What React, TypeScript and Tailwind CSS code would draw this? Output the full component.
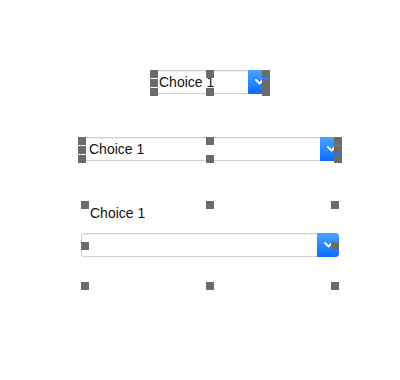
import React from "react"

// eight grab handles around a selected widget on the designer canvas
function Handles() {
  const spots = [
    "left-0 top-0",
    "left-1/2 -translate-x-1/2 top-0",
    "right-0 top-0",
    "left-0 top-1/2 -translate-y-1/2",
    "right-0 top-1/2 -translate-y-1/2",
    "left-0 bottom-0",
    "left-1/2 -translate-x-1/2 bottom-0",
    "right-0 bottom-0",
  ]
  return (
    <>
      {spots.map((s) => (
        <div key={s} className={`absolute w-2 h-2 bg-[#6b6b6b] ${s}`} />
      ))}
    </>
  )
}

function Chevron() {
  return (
    <svg width="9" height="6" viewBox="0 0 9 6" fill="none">
      <path d="M1 1l3.5 3.5L8 1" stroke="white" strokeWidth="1.8" strokeLinecap="round" strokeLinejoin="round" />
    </svg>
  )
}

function Select({ text, rounded }: { text?: string; rounded?: boolean }) {
  return (
    <div
      className={`flex items-center h-6 bg-white border border-[#cfcfcf] shadow-[inset_0_1px_1px_rgba(0,0,0,0.06)] ${
        rounded ? "rounded-[3px]" : ""
      }`}
    >
      <span className="flex-1 pl-2 text-[14px] text-[#111] leading-none">{text}</span>
      <div
        className={`self-stretch -my-px -mr-px w-[22px] flex items-center justify-center bg-gradient-to-b from-[#4aa3ff] to-[#0a6bff] ${
          rounded ? "rounded-r-[4px]" : ""
        }`}
      >
        <Chevron />
      </div>
    </div>
  )
}

export default function App() {
  return (
    <div className="w-[400px] h-[380px] bg-white overflow-hidden flex flex-col font-['Liberation_Sans',Arial,sans-serif]">
      {/* compact select */}
      <div className="relative mt-[70px] ml-[150px] w-[120px] h-[26px]">
        <Select text="Choice 1" />
        <Handles />
      </div>

      {/* wide select */}
      <div className="relative mt-[41px] ml-[78px] w-[264px] h-[26px] pl-[2px]">
        <Select text="Choice 1" />
        <Handles />
      </div>

      {/* labelled select */}
      <div className="relative mt-[38px] ml-[81px] w-[258px] h-[89px] flex flex-col">
        <div className="pl-[9px] pt-[2px] text-[14px] text-[#111] leading-5">Choice 1</div>
        <div className="mt-[10px]">
          <Select rounded />
        </div>
        <Handles />
      </div>
    </div>
  )
}
